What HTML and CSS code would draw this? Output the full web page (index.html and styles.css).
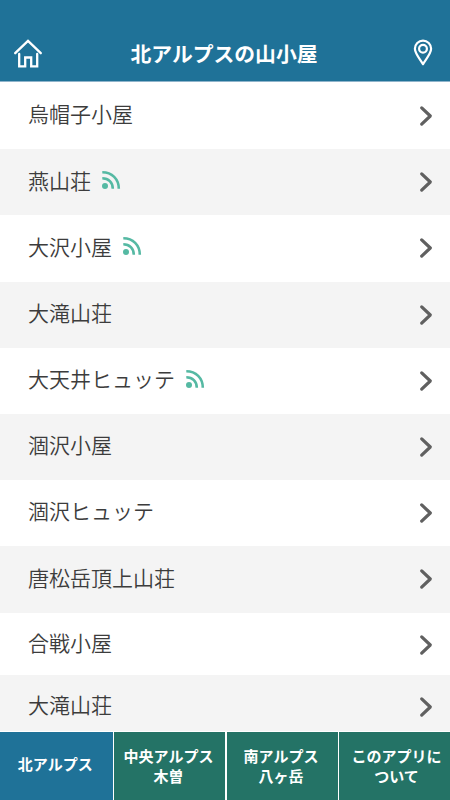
FILE: index.html
```html
<!DOCTYPE html>
<html lang="ja">
<head>
<meta charset="utf-8">
<title>北アルプスの山小屋</title>
<link rel="stylesheet" href="styles.css">
</head>
<body>
<svg class="defs" aria-hidden="true">
  <symbol id="chevron" viewBox="0 0 14 22"><path d="M2.7 2.9 11.3 11 2.7 19.1"/></symbol>
  <symbol id="feed" viewBox="0 0 20 20"><circle cx="4" cy="16" r="3"/><path d="M1.3 8.2C7.5 8.2 11.8 12.5 11.8 18.7M1.3 2.2C11 2.2 17.8 9 17.8 18.7"/></symbol>
</svg>
<div class="app">
  <header class="header">
    <svg class="home" viewBox="0 0 30 32"><path d="M2.2 15.2 15 2.8 27.8 15.2M6.2 16V28.3H12.2V19.5H18.2V28.3H24.2V16"/></svg>
    <h1 class="title">北アルプスの山小屋</h1>
    <svg class="pin" viewBox="0 0 20 28"><path d="M10 25.2C7.4 20.6 1.9 14.6 1.9 9.8A8.1 8.1 0 0 1 18.1 9.8C18.1 14.6 12.6 20.6 10 25.2Z"/><circle cx="10" cy="9.8" r="3.9"/></svg>
  </header>
  <ul class="list">
    <li class="row"><span>烏帽子小屋</span><svg class="chevron"><use href="#chevron"/></svg></li>
    <li class="row"><span>燕山荘</span><svg class="feed"><use href="#feed"/></svg><svg class="chevron"><use href="#chevron"/></svg></li>
    <li class="row"><span>大沢小屋</span><svg class="feed"><use href="#feed"/></svg><svg class="chevron"><use href="#chevron"/></svg></li>
    <li class="row"><span>大滝山荘</span><svg class="chevron"><use href="#chevron"/></svg></li>
    <li class="row"><span>大天井ヒュッテ</span><svg class="feed"><use href="#feed"/></svg><svg class="chevron"><use href="#chevron"/></svg></li>
    <li class="row"><span>涸沢小屋</span><svg class="chevron"><use href="#chevron"/></svg></li>
    <li class="row"><span>涸沢ヒュッテ</span><svg class="chevron"><use href="#chevron"/></svg></li>
    <li class="row"><span>唐松岳頂上山荘</span><svg class="chevron"><use href="#chevron"/></svg></li>
    <li class="row"><span>合戦小屋</span><svg class="chevron"><use href="#chevron"/></svg></li>
    <li class="row"><span>大滝山荘</span><svg class="chevron"><use href="#chevron"/></svg></li>
  </ul>
  <nav class="tabs">
    <a class="tab active">北アルプス</a>
    <a class="tab">中央アルプス<br>木曽</a>
    <a class="tab">南アルプス<br>八ヶ岳</a>
    <a class="tab about">このアプリに<br>ついて</a>
  </nav>
</div>
</body>
</html>
```
FILE: styles.css
```css
* { box-sizing: border-box; }
body {
  margin: 0;
  font-family: "Noto Sans CJK JP", sans-serif;
}
.defs { position: absolute; width: 0; height: 0; }
svg { fill: none; stroke-linecap: round; stroke-linejoin: round; flex: none; }
.app {
  width: 450px;
  height: 800px;
  display: flex;
  flex-direction: column;
  overflow: hidden;
  background: #fff;
}
.header {
  height: 82px;
  flex: none;
  padding: 24px 17px 0 13px;
  display: flex;
  align-items: center;
  justify-content: space-between;
  background: #1f7298;
  border-bottom: 1px solid #8fb4cb;
  color: #fff;
}
.home { width: 30px; height: 32px; margin-top: 2px; stroke: #fff; stroke-width: 2.3; stroke-linejoin: miter; }
.pin { width: 20px; height: 28px; stroke: #fff; stroke-width: 2.2; }
.title { margin: 0 8px 0 0; font-size: 20.8px; font-weight: 700; line-height: 30px; }
.list {
  flex: 1;
  min-height: 0;
  margin: 0;
  padding: 1px 0 0;
  list-style: none;
  overflow: hidden;
}
.row {
  height: 66.2px;
  padding: 0 17px 2px 28px;
  display: flex;
  align-items: center;
  color: #3c3c3c;
  font-size: 21px;
  font-weight: 350;
  line-height: 30px;
}
.row span { margin-bottom: 3.5px; }
.row:nth-child(even) { background: #f4f4f4; }
.row:nth-child(9) { height: 62.6px; padding-bottom: 0; }
.row:last-child { height: 57px; padding: 4px 17px 0 28px; }
.feed { width: 20px; height: 20px; margin: -2px 0 0 10px; stroke: #55b9a3; stroke-width: 2.6; stroke-linecap: butt; }
#feed circle { fill: #55b9a3; stroke: none; }
.chevron { width: 14px; height: 22px; margin: 2px 0 0 auto; stroke: #606060; stroke-width: 3.2; }
.tabs {
  flex: none;
  height: 69px;
  display: grid;
  grid-template-columns: 112.5px 111px 111px 1fr;
  gap: 0 1.5px;
  border-top: 1px solid #fff;
  background: #fff;
}
.tab {
  display: flex;
  align-items: center;
  justify-content: center;
  padding: 0 2px 1px 0;
  background: #247366;
  color: #fff;
  font-size: 15px;
  font-weight: 700;
  line-height: 20px;
  text-align: center;
}
.active { padding: 0 2px 5px 0; background: #1f7298; }
.about { padding-left: 6px; }
```
